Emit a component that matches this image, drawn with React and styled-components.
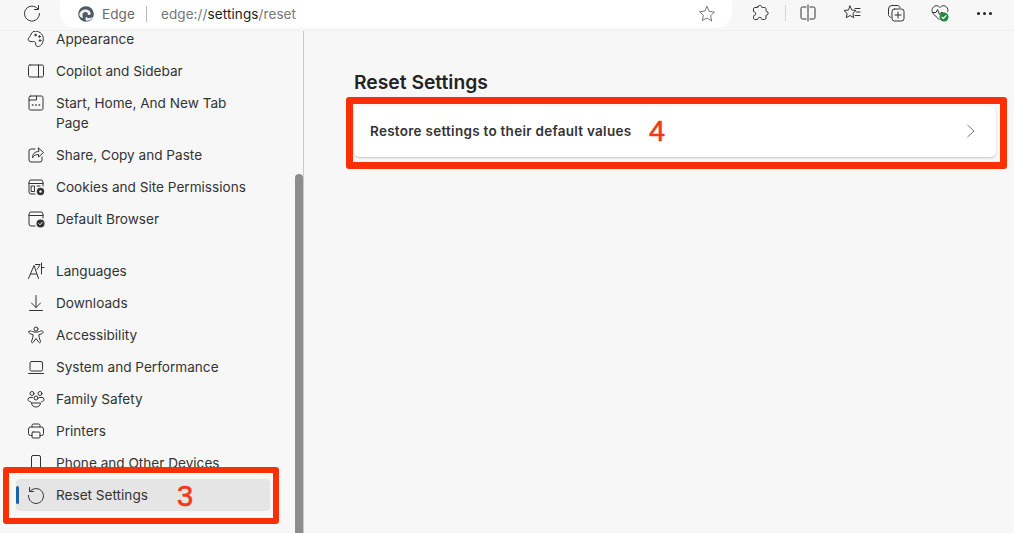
import React from 'react';
import styled, {createGlobalStyle} from 'styled-components';

const GlobalStyle = createGlobalStyle`
  html, body {
    margin: 0;
    padding: 0;
    height: 100%;
    overflow: hidden;
    background: #f7f7f7;
  }
  * {
    box-sizing: border-box;
  }
`;

const Icon = ({size = 20, children, ...rest}) => (
    <svg width={size} height={size} viewBox="0 0 20 20" fill="none" stroke="#333" strokeWidth="1"
         strokeLinecap="round" strokeLinejoin="round" {...rest}>
        {children}
    </svg>
);

const icons = {
    appearance: <>
        <path d="M8 2.200c4.500-.8 9.200 2.600 9.300 7.300.1 4.200-2 7.600-4.800 8-2 .3-2.800-1-2.800-2.400 0-1.500-.5-2.700-2.300-2.600-1.700.1-3.200.5-4.500-.7-1.200-1.200-.7-2.600.5-3.600C4.800 7 5 3 8 2.200z"/>
        <circle cx="9.500" cy="6" r=".8" fill="#333"/>
        <circle cx="13.500" cy="7.500" r=".8" fill="#333"/>
        <circle cx="14" cy="11.500" r=".8" fill="#333"/>
    </>,
    sidebar: <>
        <rect x="2.500" y="4" width="15" height="12" rx="1.500"/>
        <path d="M12.500 4v12"/>
    </>,
    newtab: <>
        <path d="M4.500 3h11a1.500 1.500 0 0 1 1.500 1.500v11a1.500 1.500 0 0 1-1.500 1.500h-11A1.500 1.500 0 0 1 3 15.500v-11A1.500 1.500 0 0 1 4.500 3z"/>
        <path d="M3 7h7.500V3"/>
        <path d="M6.500 12h.4M9.800 12h.4M13.100 12h.4" strokeWidth="1.500"/>
    </>,
    share: <>
        <path d="M9 4H5a2 2 0 0 0-2 2v9a2 2 0 0 0 2 2h9a2 2 0 0 0 2-2v-3"/>
        <path d="M12.500 3l5 4.500-5 4.500V9.500c-3 0-5 1-6 3.500 0-4 2-6.500 6-6.500z"/>
    </>,
    cookies: <>
        <path d="M17 9V5a2 2 0 0 0-2-2H5a2 2 0 0 0-2 2v10a2 2 0 0 0 2 2h4"/>
        <path d="M3 6.500h14"/>
        <rect x="5.500" y="9" width="3" height="5.500"/>
        <path d="M11 9h3"/>
        <circle cx="14.500" cy="14.500" r="3.700" fill="#333" stroke="none"/>
        <circle cx="14.500" cy="14.500" r="1.200" fill="#f7f7f7" stroke="none"/>
    </>,
    browser: <>
        <path d="M9 17H5a2 2 0 0 1-2-2V5a2 2 0 0 1 2-2h10a2 2 0 0 1 2 2v4"/>
        <path d="M3 6.500h14"/>
        <circle cx="14.500" cy="14.500" r="4" fill="#333" stroke="none"/>
        <path d="M12.800 14.600l1.200 1.200 2.200-2.400" stroke="#f7f7f7"/>
    </>,
    languages: <>
        <path d="M2.500 17.500L8 4.500l4.500 13M4.500 13h6"/>
        <path d="M9.500 3.500h4.500M13.500 3.500c-.2 2-1 3.500-2.500 4.700"/>
        <path d="M15.500 2v11M15.500 6.500h2.500"/>
    </>,
    downloads: <>
        <path d="M10 2.500v12M5.500 10l4.500 4.500 4.500-4.500M3.500 17.500h13"/>
    </>,
    accessibility: <>
        <circle cx="10" cy="4" r="2"/>
        <path d="M3 6.500c1-1 2-.6 3.500 0 2.300.9 4.700.9 7 0 1.500-.6 2.500-1 3.500 0 .6 1-.2 1.800-1.200 2.200l-3 1.100.5 3 1.200 3.700c.3 1.200-1.200 1.800-1.800.7L10 13.500l-2.700 3.700c-.6 1.100-2.100.5-1.800-.7l1.200-3.700.5-3-3-1.100C3.200 8.300 2.400 7.500 3 6.500z"/>
    </>,
    system: <>
        <rect x="4" y="4.500" width="12.500" height="9.500" rx="1.500"/>
        <path d="M2.500 16.500h15"/>
    </>,
    family: <>
        <circle cx="6" cy="4.500" r="2"/>
        <circle cx="14" cy="4.500" r="2"/>
        <circle cx="10" cy="9" r="2"/>
        <path d="M6.500 8.500H4A2 2 0 0 0 2 10.500c0 1.300 1 2 2.500 2.300M13.500 8.500H16a2 2 0 0 1 2 2c0 1.300-1 2-2.500 2.300"/>
        <path d="M5.500 14h9c0 2.500-2 4-4.500 4s-4.500-1.500-4.500-4z"/>
    </>,
    printers: <>
        <path d="M6 6V4.500A1.500 1.500 0 0 1 7.500 3h5A1.500 1.500 0 0 1 14 4.500V6"/>
        <path d="M6 14.500H4.500A2 2 0 0 1 2.500 12.500V8a2 2 0 0 1 2-2h11a2 2 0 0 1 2 2v4.500a2 2 0 0 1-2 2H14"/>
        <rect x="6" y="11" width="8" height="6" rx="1"/>
    </>,
    phone: <>
        <rect x="5.500" y="2.500" width="9" height="15" rx="1.500"/>
    </>,
    reset: <>
        <path d="M4.200 6.200A7.500 7.500 0 1 1 2.500 10.500"/>
        <path d="M3.500 2.500v4h4"/>
    </>,
};

const Reload = () => (
    <Icon>
        <path d="M15.800 5.800A7.500 7.500 0 1 0 17.500 10.500"/>
        <path d="M16.500 2.500v4h-4"/>
    </Icon>
);

const EdgeLogo = () => (
    <svg width="16" height="16" viewBox="0 0 16 16">
        <circle cx="8" cy="8" r="7.800" fill="#4d5963"/>
        <path d="M1.200 8.500c.5-3 3-5 6-5 3.500 0 5.500 2 5.500 4 0 1.300-1.600 1.800-3 1.300.8-1.800-.8-3-2.800-2.700-2.400.3-3 3.500-1.700 6C3 12 1.600 10.500 1.200 8.500z"
              fill="#eef0f1"/>
        <path d="M8 14.800c3 .3 5.500-1 6.700-3.800-2.200 1.500-5.200 1.600-6.500-.2-.9 1.200-1 2.900-.2 4z" fill="#eef0f1"/>
    </svg>
);

const navGroups = [
    [
        {label: 'Appearance', icon: 'appearance'},
        {label: 'Copilot and Sidebar', icon: 'sidebar'},
        {label: 'Start, Home, And New Tab Page', icon: 'newtab'},
        {label: 'Share, Copy and Paste', icon: 'share'},
        {label: 'Cookies and Site Permissions', icon: 'cookies'},
        {label: 'Default Browser', icon: 'browser'},
    ],
    [
        {label: 'Languages', icon: 'languages'},
        {label: 'Downloads', icon: 'downloads'},
        {label: 'Accessibility', icon: 'accessibility'},
        {label: 'System and Performance', icon: 'system'},
        {label: 'Family Safety', icon: 'family'},
        {label: 'Printers', icon: 'printers'},
        {label: 'Phone and Other Devices', icon: 'phone'},
        {label: 'Reset Settings', icon: 'reset', active: true},
    ],
];

const App = () => {
    return (
        <Page>
            <GlobalStyle/>
            <Toolbar>
                <ToolButton $width={32}><Reload/></ToolButton>
                <AddressBar>
                    <EdgeLogo/>
                    <SiteName>Edge</SiteName>
                    <AddressDivider/>
                    <Url>edge://<strong>settings</strong>/reset</Url>
                    <StarSlot>
                        <Icon stroke="#777">
                            <path d="M10 2.500l2.300 5 5.200.6-3.900 3.500 1.100 5.400L10 14l-4.700 2.600 1.100-5.400-3.900-3.500 5.200-.6z"/>
                        </Icon>
                    </StarSlot>
                </AddressBar>
                <ToolGroup>
                    <ToolButton>
                        <Icon>
                            <path d="M8 3.500c0-1.500 3.500-1.500 3.500 0 0 .8 0 1 1 1h2c1 0 1.500.5 1.500 1.500v1.500c0 1 .2 1 1 1 1.500 0 1.500 3.500 0 3.500-.8 0-1 0-1 1V15c0 1-.5 1.500-1.500 1.500h-2c-1 0-1-.3-1-1 0-1.500-3.500-1.500-3.500 0 0 .7 0 1-1 1H5c-1 0-1.500-.5-1.500-1.500v-1.500c0-1 .3-1 1-1 1.500 0 1.500-3.500 0-3.500-.7 0-1 0-1-1V6c0-1 .5-1.500 1.500-1.500h2c1 0 1 0 1-1z"/>
                        </Icon>
                    </ToolButton>
                    <ToolDivider/>
                    <ToolButton>
                        <Icon>
                            <path d="M8 4H4.500A1.500 1.500 0 0 0 3 5.500v9A1.500 1.500 0 0 0 4.500 16H8M12 4h3.500A1.500 1.500 0 0 1 17 5.500v9a1.500 1.500 0 0 1-1.500 1.500H12"/>
                            <path d="M10 2v16"/>
                        </Icon>
                    </ToolButton>
                    <ToolButton>
                        <Icon>
                            <path d="M8 3l1.800 4 4.200.5-3.100 2.900.8 4.300L8 12.500l-3.700 2.200.8-4.300L2 7.500 6.200 7z"/>
                            <path d="M13 5.500h5M14.500 9h3.500M13 12.500h5"/>
                        </Icon>
                    </ToolButton>
                    <ToolButton>
                        <Icon>
                            <path d="M5 14.500c-1.500-.5-2.500-1.500-2.500-3V6a3.500 3.500 0 0 1 3.500-3.500h5c1.500 0 2.500.5 3 2"/>
                            <rect x="6" y="6" width="12" height="12" rx="2.500"/>
                            <path d="M12 9v6M9 12h6"/>
                        </Icon>
                    </ToolButton>
                    <ToolButton>
                        <Icon>
                            <path d="M9 16.500L3.500 11C1.500 9 1.500 6 3.500 4s5-1.500 6.500.5C11.500 2.500 14.500 2 16.500 4c1.300 1.300 1.700 3 1.300 4.500"/>
                            <path d="M2.500 9.500h3.500l1.500-3 2 5 1.500-2h1.500"/>
                            <circle cx="14" cy="14" r="4.500" fill="#1e8a3c" stroke="none"/>
                            <path d="M12 14.200l1.400 1.300 2.600-2.800" stroke="#fff" strokeWidth="1.200"/>
                        </Icon>
                    </ToolButton>
                    <ToolButton>
                        <Dots/>
                    </ToolButton>
                </ToolGroup>
            </Toolbar>
            <Body>
                <Sidebar>
                    {navGroups.map((group, i) => (
                        <NavGroup key={i}>
                            {group.map((item) => (
                                <NavItem key={item.label} $active={item.active}>
                                    {item.active && <ActiveMark/>}
                                    <Icon style={{flexShrink: 0}}>{icons[item.icon]}</Icon>
                                    <NavLabel>{item.label}</NavLabel>
                                    {item.active && <NavFrame/>}
                                    {item.active && <NavStep>3</NavStep>}
                                </NavItem>
                            ))}
                        </NavGroup>
                    ))}
                    <ScrollThumb/>
                </Sidebar>
                <Main>
                    <Heading>Reset Settings</Heading>
                    <Card>
                        <CardLabel>Restore settings to their default values</CardLabel>
                        <svg width="16" height="16" viewBox="0 0 16 16" fill="none" stroke="#777" strokeWidth="1">
                            <path d="M4.500 2l6.500 6-6.500 6"/>
                        </svg>
                        <CardFrame/>
                        <CardStep>4</CardStep>
                    </Card>
                </Main>
            </Body>
        </Page>
    );
};

const Page = styled.div`
  width: 1014px;
  height: 533px;
  display: flex;
  flex-direction: column;
  overflow: hidden;
  background: #f7f7f7;
  font-family: Inter, "Liberation Sans", sans-serif;
`;

const Toolbar = styled.header`
  height: 31px;
  flex-shrink: 0;
  display: flex;
  align-items: flex-start;
  padding: 0 0 0 16px;
  background: #f7f7f7;
  border-bottom: 1px solid #efefef;
  position: relative;
  z-index: 2;
`;

const ToolButton = styled.div`
  width: ${props => props.$width || 44}px;
  height: 26px;
  display: flex;
  align-items: center;
  justify-content: center;
`;

const AddressBar = styled.div`
  width: 672px;
  height: 28px;
  margin-left: 12px;
  padding: 0 15px 0 18px;
  display: flex;
  align-items: center;
  background: #fff;
  border-radius: 0 0 16px 16px;
`;

const SiteName = styled.span`
  margin-left: 8px;
  font-size: 13.5px;
  letter-spacing: 0.1px;
  color: #6b6b6b;
`;

const AddressDivider = styled.span`
  width: 1px;
  height: 16px;
  margin: 0 14px 0 11px;
  background: #b5b5b5;
`;

const Url = styled.span`
  font-size: 13.5px;
  letter-spacing: 0.1px;
  color: #777;

  strong {
    font-weight: 400;
    color: #222;
  }
`;

const StarSlot = styled.div`
  margin-left: auto;
  display: flex;
`;

const ToolGroup = styled.div`
  display: flex;
  align-items: center;
  margin-left: 6px;
`;

const ToolDivider = styled.span`
  width: 1px;
  height: 16px;
  margin-left: 3px;
  background: #d8d8d8;
`;

const Dots = styled.span`
  width: 3px;
  height: 3px;
  border-radius: 50%;
  background: #222;
  box-shadow: -6px 0 0 #222, 6px 0 0 #222;
`;

const Body = styled.div`
  flex: 1;
  display: flex;
  min-height: 0;
`;

const Sidebar = styled.nav`
  position: relative;
  width: 304px;
  flex-shrink: 0;
  padding: 0 33px 0 16px;
  display: flex;
  flex-direction: column;
  gap: 20px;
  overflow: hidden;
  border-right: 1px solid #c9c9c9;
`;

const NavGroup = styled.div`
  display: flex;
  flex-direction: column;

  &:first-child {
    margin-top: -8px;
  }
`;

const NavItem = styled.div`
  position: relative;
  min-height: 32px;
  padding: 6px 10px;
  display: flex;
  gap: 10px;
  border-radius: 4px;
  background: ${props => props.$active ? '#e5e5e5' : 'transparent'};
`;

const NavLabel = styled.span`
  font-size: 13.6px;
  line-height: 20px;
  color: #333;
`;

const ActiveMark = styled.span`
  position: absolute;
  left: 0;
  top: 7px;
  width: 3px;
  height: 18px;
  border-radius: 2px;
  background: #1a63ad;
`;

const NavFrame = styled.span`
  position: absolute;
  top: -12px;
  right: -9px;
  bottom: -13px;
  left: -13px;
  border: 6px solid #fb2f06;
  border-radius: 3px;
  pointer-events: none;
`;

const Step = styled.span`
  position: absolute;
  font-family: "Liberation Sans", Arial, sans-serif;
  font-size: 29px;
  line-height: 32px;
  font-weight: 400;
  color: #ee3a16;
  -webkit-text-stroke: 0.6px #ee3a16;
`;

const NavStep = styled(Step)`
  left: 161px;
  top: 1px;
`;

const ScrollThumb = styled.span`
  position: absolute;
  top: 143px;
  right: 0;
  bottom: 0;
  width: 8px;
  border-radius: 4px 4px 0 0;
  background: #8d8d8d;
`;

const Main = styled.main`
  flex: 1;
  padding: 38px 18px 0 50px;
`;

const Heading = styled.h1`
  margin: 0 0 12px;
  font-size: 19.3px;
  line-height: 26px;
  font-weight: 600;
  color: #242424;
`;

const Card = styled.section`
  position: relative;
  height: 50px;
  padding: 0 17px 2px 16px;
  display: flex;
  align-items: center;
  justify-content: space-between;
  background: #fff;
  border-radius: 5px;
  box-shadow: 0 1px 2px rgba(0, 0, 0, .2);
`;

const CardLabel = styled.span`
  font-size: 13.5px;
  font-weight: 600;
  letter-spacing: 0.27px;
  color: #333;
`;

const CardFrame = styled.span`
  position: absolute;
  top: -10px;
  right: -11px;
  bottom: -12px;
  left: -8px;
  border: 7px solid #fb2f06;
  border-radius: 3px;
  pointer-events: none;
`;

const CardStep = styled(Step)`
  left: 295px;
  top: 8px;
`;

export default App;
